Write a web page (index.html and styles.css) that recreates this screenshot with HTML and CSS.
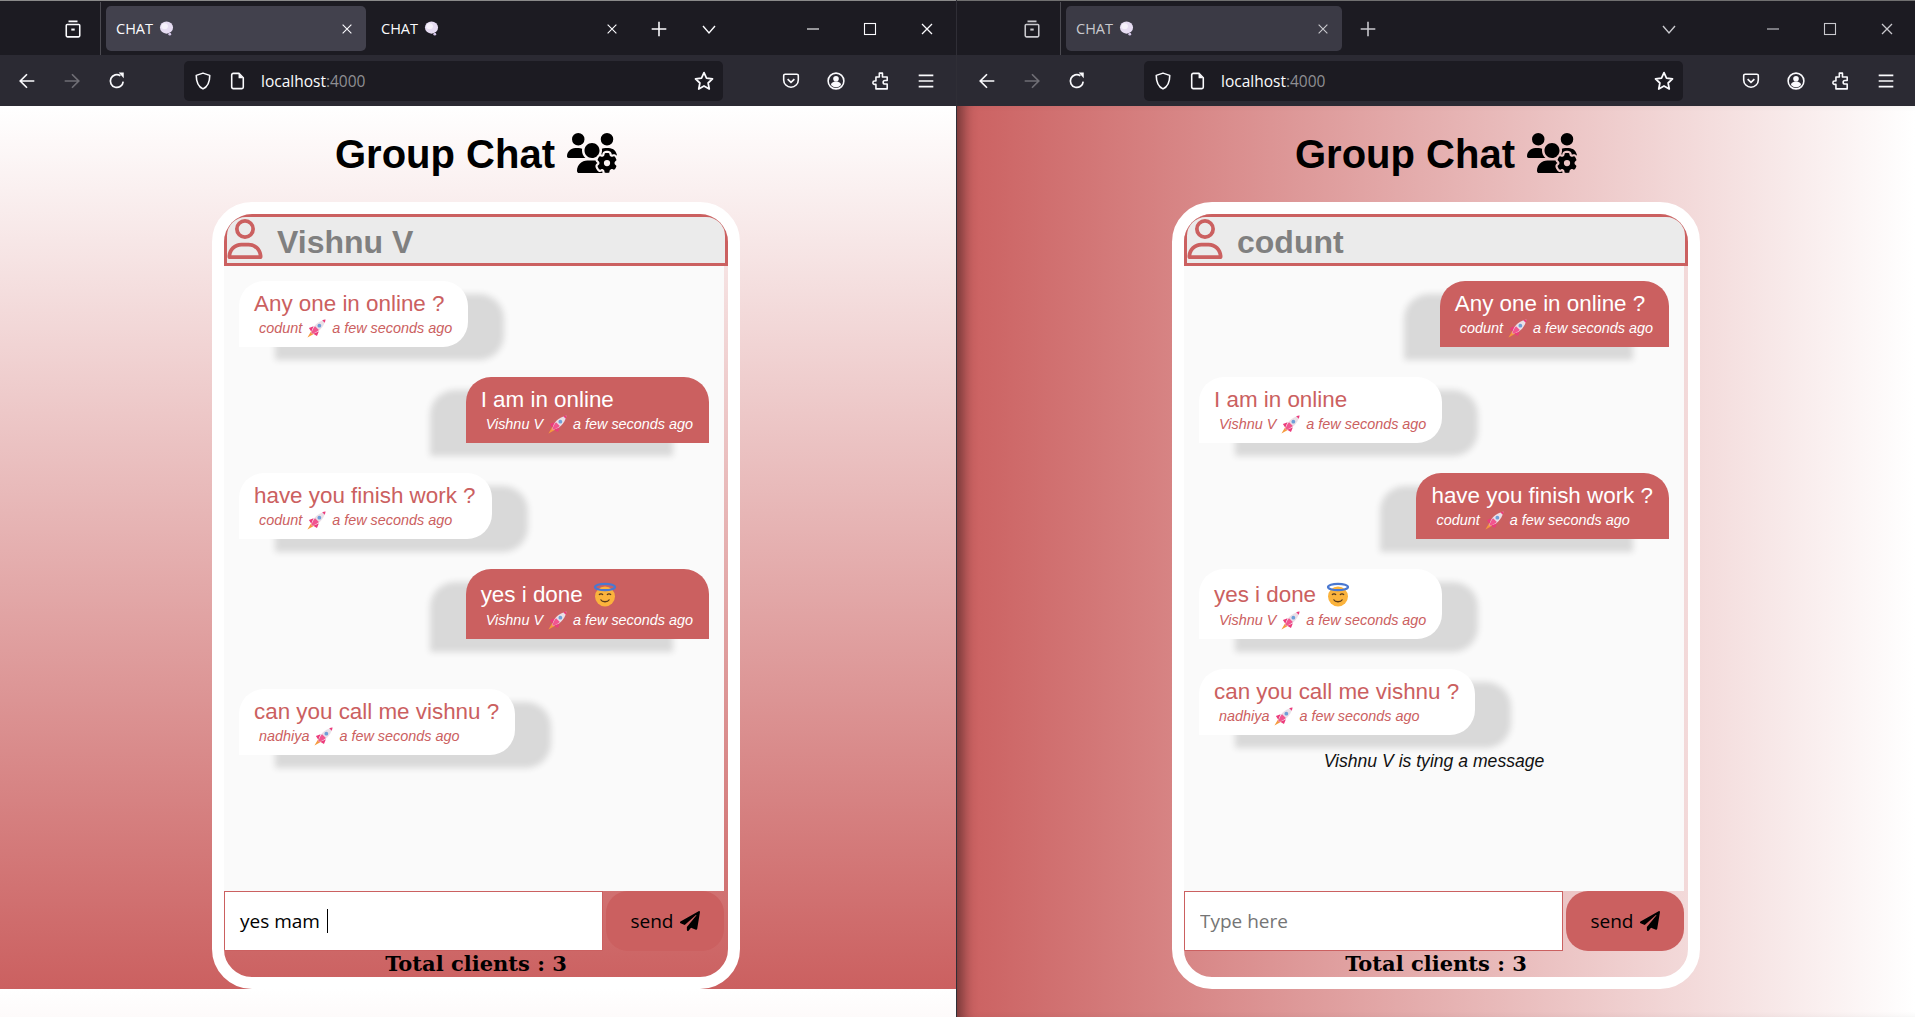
FILE: index.html
```html
<!DOCTYPE html>
<html lang="en">

<head>
    <meta charset="UTF-8">
    <meta name="viewport" content="width=device-width, initial-scale=1.0">
    <title>Group Chat</title>
    <link rel="stylesheet" href="styles.css">
</head>

<body>
    <!-- shared icons -->
    <svg class="defs" aria-hidden="true">
        <symbol id="i-view" viewBox="0 0 16 16"><path d="M4 1.2h8M2.8 4h10.4a.8.8 0 0 1 .8.8v9a1.2 1.2 0 0 1-1.2 1.2H3.2A1.2 1.2 0 0 1 2 13.800v-9a.8.8 0 0 1 .8-.8z" fill="none" stroke="currentColor" stroke-width="1.400"/><path d="M6.500 8.500h3" stroke="currentColor" stroke-width="1.800"/></symbol>
        <symbol id="i-x" viewBox="0 0 16 16"><path d="M3 3l10 10M13 3L3 13" fill="none" stroke="currentColor" stroke-width="1.300"/></symbol>
        <symbol id="i-plus" viewBox="0 0 16 16"><path d="M8 1.500v13M1.500 8h13" fill="none" stroke="currentColor" stroke-width="1.400"/></symbol>
        <symbol id="i-down" viewBox="0 0 16 16"><path d="M2 5l6 7 6-7" fill="none" stroke="currentColor" stroke-width="1.400"/></symbol>
        <symbol id="i-min" viewBox="0 0 16 16"><path d="M2 8h12" fill="none" stroke="currentColor" stroke-width="1.100"/></symbol>
        <symbol id="i-max" viewBox="0 0 16 16"><rect x="2.500" y="2.500" width="11" height="11" fill="none" stroke="currentColor" stroke-width="1.100"/></symbol>
        <symbol id="i-back" viewBox="0 0 16 16"><path d="M14.500 8H2M8 2L2 8l6 6" fill="none" stroke="currentColor" stroke-width="1.500"/></symbol>
        <symbol id="i-forward" viewBox="0 0 16 16"><path d="M1.500 8H14M8 2l6 6-6 6" fill="none" stroke="currentColor" stroke-width="1.500"/></symbol>
        <symbol id="i-reload" viewBox="0 0 16 16"><path d="M13.500 8.500A5.700 5.700 0 1 1 11 3.300" fill="none" stroke="currentColor" stroke-width="1.500"/><path d="M9.500 0.500h4.500v5z" fill="currentColor"/></symbol>
        <symbol id="i-shield" viewBox="0 0 16 16"><path d="M8 1l6 2c0 6-1.500 9.800-6 12C3.500 12.800 2 9 2 3z" fill="none" stroke="currentColor" stroke-width="1.400" stroke-linejoin="round"/></symbol>
        <symbol id="i-page" viewBox="0 0 16 16"><path d="M3.800 1.200h5l3.900 3.900v8.300a1.400 1.400 0 0 1-1.400 1.400H3.800a1.400 1.400 0 0 1-1.400-1.400V2.600a1.400 1.400 0 0 1 1.400-1.400z" fill="none" stroke="currentColor" stroke-width="1.400"/><path d="M8.500 1.500v4h4z" fill="currentColor"/></symbol>
        <symbol id="i-star" viewBox="0 0 16 16"><path d="M8 1.300l2 4.400 4.800.6-3.500 3.300.9 4.800L8 12l-4.200 2.400.9-4.800L1.200 6.300 6 5.700z" fill="none" stroke="currentColor" stroke-width="1.400" stroke-linejoin="round"/></symbol>
        <symbol id="i-pocket" viewBox="0 0 16 16"><path d="M2.800 2h10.400A1.300 1.300 0 0 1 14.500 3.300V7a6.500 6.500 0 0 1-13 0V3.300A1.300 1.300 0 0 1 2.800 2z" fill="none" stroke="currentColor" stroke-width="1.400"/><path d="M5 6.300l3 2.900 3-2.900" fill="none" stroke="currentColor" stroke-width="1.500"/></symbol>
        <symbol id="i-account" viewBox="0 0 16 16"><circle cx="8" cy="8" r="7" fill="none" stroke="currentColor" stroke-width="1.400"/><circle cx="8" cy="6" r="2.500" fill="currentColor"/><path d="M3.500 11.500a4.500 3 0 0 1 9 0 6 6 0 0 1-9 0z" fill="currentColor"/></symbol>
        <symbol id="i-ext" viewBox="0 0 16 16"><path d="M6.500 1h2.800v3.500h4.200v3h-2a1.600 1.600 0 0 0 0 3.200h2v4.300H3.500V11H2.300a1.500 1.500 0 0 1 0-3h1.200V4.500h3z" fill="none" stroke="currentColor" stroke-width="1.400" stroke-linejoin="round"/></symbol>
        <symbol id="i-menu" viewBox="0 0 16 16"><path d="M1.500 3h13M1.500 8h13M1.500 13h13" fill="none" stroke="currentColor" stroke-width="1.400"/></symbol>
        <symbol id="i-thought" viewBox="0 0 16 16"><ellipse cx="8" cy="7" rx="7" ry="6.500" fill="#e6dcf2"/><ellipse cx="6" cy="5.500" rx="3.500" ry="3.200" fill="#f6f2fb"/><circle cx="11.500" cy="14" r="1.500" fill="#d2c4e6"/></symbol>
        <symbol id="i-group" viewBox="0 0 640 512"><path d="M144 160A80 80 0 1 0 144 0a80 80 0 1 0 0 160zm368 0A80 80 0 1 0 512 0a80 80 0 1 0 0 160zM0 298.700C0 310.400 9.600 320 21.300 320H234.700c.2 0 .4 0 .7 0c-26.600-23.500-43.300-57.800-43.300-96c0-7.600 .7-15 1.900-22.300c-13.600-6.300-28.700-9.700-44.600-9.700H106.700C47.800 192 0 239.800 0 298.700zM320 320c24 0 45.900-8.800 62.700-23.300c2.500-3.700 5.200-7.300 8-10.700c2.700-3.300 5.700-6.100 9-8.300C410 262.300 416 243.900 416 224c0-53-43-96-96-96s-96 43-96 96s43 96 96 96zm65.400 60.200c-10.300-5.900-18.100-16.200-20.800-28.200H261.300C187.700 352 128 411.700 128 485.300c0 14.700 11.900 26.700 26.700 26.700H455.200c-2.100-5.200-3.200-10.900-3.200-16.400v-3c-1.300-.7-2.700-1.500-4-2.300l-2.600 1.500c-16.800 9.700-40.500 8-54.700-9.700c-4.500-5.600-8.600-11.500-12.400-17.600l-.1-.2-.1-.2-2.400-4.100-.1-.2-.1-.2c-3.400-6.200-6.400-12.600-9-19.300c-8.200-21.200 2.200-42.600 19-52.300l2.700-1.500c0-.8 0-1.500 0-2.300s0-1.500 0-2.300l-2.700-1.500zM533.300 192H490.700c-15.900 0-31 3.500-44.600 9.700c1.300 7.200 1.900 14.700 1.900 22.300c0 17.400-3.500 33.900-9.700 49c2.500 .9 4.900 2 7.200 3.300l2.600 1.500c1.300-.8 2.600-1.600 4-2.300v-3c0-19.400 13.300-39.100 35.800-42.600c7.900-1.200 16-1.900 24.200-1.900s16.300 .6 24.200 1.900c22.500 3.500 35.800 23.200 35.800 42.600v3c1.300 .7 2.700 1.500 4 2.300l2.600-1.500c16.800-9.700 40.500-8 54.700 9.700c2.300 2.800 4.500 5.800 6.600 8.700c-2.100-57.100-49-102.600-106.600-102.600zm91.300 163.900c6.300-3.600 9.500-11.100 6.800-18c-2.100-5.500-4.600-10.800-7.400-15.900l-2.300-4c-3.100-5.100-6.500-9.900-10.200-14.500c-4.600-5.700-12.700-6.700-19-3l-2.900 1.700c-9.200 5.300-20.400 4-29.600-1.300s-16.100-14.500-16.100-25.100v-3.400c0-7.300-4.900-13.800-12.100-14.900c-6.500-1-13.100-1.500-19.900-1.500s-13.400 .5-19.900 1.500c-7.200 1.100-12.100 7.600-12.100 14.900v3.400c0 10.600-6.900 19.800-16.100 25.100s-20.400 6.600-29.600 1.300l-2.900-1.700c-6.300-3.600-14.400-2.600-19 3c-3.700 4.600-7.100 9.500-10.200 14.600l-2.300 3.900c-2.800 5.100-5.300 10.400-7.400 15.900c-2.600 6.800 .5 14.300 6.800 17.900l2.900 1.700c9.200 5.300 13.700 15.800 13.700 26.400s-4.500 21.100-13.700 26.400l-3 1.700c-6.300 3.600-9.500 11.100-6.800 17.900c2.100 5.500 4.600 10.700 7.400 15.800l2.400 4.100c3 5.100 6.400 9.900 10.100 14.500c4.600 5.700 12.700 6.700 19 3l2.900-1.700c9.200-5.300 20.400-4 29.600 1.300s16.100 14.500 16.100 25.100v3.400c0 7.300 4.900 13.800 12.100 14.900c6.500 1 13.100 1.500 19.900 1.500s13.400-.5 19.900-1.500c7.200-1.100 12.100-7.600 12.100-14.900v-3.400c0-10.600 6.900-19.800 16.100-25.100s20.400-6.600 29.600-1.300l2.900 1.700c6.300 3.600 14.400 2.600 19-3c3.700-4.600 7.100-9.400 10.100-14.500l2.400-4.200c2.800-5.100 5.300-10.300 7.400-15.800c2.600-6.800-.5-14.300-6.800-17.900l-3-1.700c-9.200-5.300-13.700-15.800-13.700-26.400s4.500-21.100 13.700-26.400l3-1.700zM472 384a40 40 0 1 1 80 0 40 40 0 1 1 -80 0z"/></symbol>
        <symbol id="i-user" viewBox="0 0 448 512"><path d="M304 128a80 80 0 1 0 -160 0 80 80 0 1 0 160 0zM96 128a128 128 0 1 1 256 0A128 128 0 1 1 96 128zM49.300 464H398.700c-8.900-63.300-63.300-112-129-112H178.300c-65.700 0-120.100 48.700-129 112zM0 482.300C0 383.800 79.800 304 178.300 304h91.400C368.200 304 448 383.800 448 482.300c0 16.400-13.300 29.700-29.700 29.700H29.700C13.300 512 0 498.700 0 482.300z"/></symbol>
        <symbol id="i-plane" viewBox="0 0 512 512"><path d="M476 3.200L12.500 270.600c-18.100 10.400-15.800 35.600 2.200 43.200L121 358.400l287.300-253.200c5.500-4.900 13.300 2.600 8.600 8.300L176 407v80.500c0 23.600 28.500 32.900 42.500 15.800L282 426l124.600 52.200c14.200 6 30.400-2.900 33-18.200l72-432C515 7.800 493.300-6.800 476 3.200z"/></symbol>
        <symbol id="e-rocket" viewBox="0 0 20 20"><path d="M4.500 12.500L0.500 19.500 7.500 15.500z" fill="#f59a3c"/><path d="M2 9.500l5-2-2.500 6zM10.500 18l2-5-6 2.500z" fill="#ec3b7c"/><path d="M4.500 15.500C5 9 10 2.500 19.500 .5 17.500 10 11 15 4.500 15.500z" fill="#eadfe6"/><path d="M4.500 15.500c.5-3 2-6 4-8l4 4c-2 2-5 3.500-8 4z" fill="#f2558f"/><circle cx="13" cy="7" r="2" fill="#6f9fd8"/><path d="M16 1.300l2.700 2.700c.4-1.100.6-2.300.8-3.500-1.200.2-2.400.4-3.500.8z" fill="#ec3b7c"/></symbol>
        <symbol id="e-halo" viewBox="0 0 24 24"><circle cx="12" cy="13.500" r="10" fill="#fbb33c"/><ellipse cx="12" cy="4" rx="10" ry="3.200" fill="none" stroke="#4a78d0" stroke-width="2.200"/><path d="M6 12c1-1.500 3-1.500 4 0M14 12c1-1.500 3-1.500 4 0M7.500 16.500c2 3 7 3 9 0" fill="none" stroke="#5a3a1c" stroke-width="1.300"/></symbol>
    </svg>

    <div class="desktop">
        <section class="window">
            <div class="tabbar">
                <span class="cell"><svg class="ico"><use href="#i-view"/></svg></span>
                <span class="tab-sep"></span>
                <div class="tab tab-active">
                    <span>CHAT</span>
                    <svg class="ico-thought"><use href="#i-thought"/></svg>
                    <svg class="ico-x"><use href="#i-x"/></svg>
                </div>
                <div class="tab">
                    <span>CHAT</span>
                    <svg class="ico-thought"><use href="#i-thought"/></svg>
                    <svg class="ico-x"><use href="#i-x"/></svg>
                </div>
                <span class="cell cell-plus"><svg class="ico"><use href="#i-plus"/></svg></span>
                <span class="cell cell-list"><svg class="ico ico-small"><use href="#i-down"/></svg></span>
                <div class="win-controls">
                    <span><svg class="ico ico-small"><use href="#i-min"/></svg></span>
                    <span><svg class="ico ico-small"><use href="#i-max"/></svg></span>
                    <span><svg class="ico ico-small"><use href="#i-x"/></svg></span>
                </div>
            </div>
            <div class="toolbar">
                <span class="cell"><svg class="ico"><use href="#i-back"/></svg></span>
                <span class="cell cell-off"><svg class="ico"><use href="#i-forward"/></svg></span>
                <span class="cell"><svg class="ico"><use href="#i-reload"/></svg></span>
                <div class="urlbar">
                    <svg class="ico ico-shield"><use href="#i-shield"/></svg>
                    <svg class="ico ico-page"><use href="#i-page"/></svg>
                    <span class="url">localhost<span class="url-port">:4000</span></span>
                    <svg class="ico ico-star"><use href="#i-star"/></svg>
                </div>
                <div class="tools">
                    <span class="cell"><svg class="ico"><use href="#i-pocket"/></svg></span>
                    <span class="cell"><svg class="ico"><use href="#i-account"/></svg></span>
                    <span class="cell"><svg class="ico"><use href="#i-ext"/></svg></span>
                    <span class="cell"><svg class="ico"><use href="#i-menu"/></svg></span>
                </div>
            </div>

            <main class="page page-vertical">
                <h1 class="title">Group Chat <svg class="title-icon"><use href="#i-group"/></svg></h1>
                <div class="chat">
                    <header class="chat-head">
                        <svg class="head-icon"><use href="#i-user"/></svg>
                        <span class="head-name">Vishnu V</span>
                    </header>
                    <div class="messages">
                        <div class="msg msg-in">
                            <div class="msg-text">Any one in online ?</div>
                            <div class="msg-meta">codunt <svg class="rocket"><use href="#e-rocket"/></svg> a few seconds ago</div>
                        </div>
                        <div class="msg msg-out">
                            <div class="msg-text">I am in online</div>
                            <div class="msg-meta">Vishnu V <svg class="rocket"><use href="#e-rocket"/></svg> a few seconds ago</div>
                        </div>
                        <div class="msg msg-in">
                            <div class="msg-text">have you finish work ?</div>
                            <div class="msg-meta">codunt <svg class="rocket"><use href="#e-rocket"/></svg> a few seconds ago</div>
                        </div>
                        <div class="msg msg-out msg-tall">
                            <div class="msg-text">yes i done <svg class="halo"><use href="#e-halo"/></svg></div>
                            <div class="msg-meta">Vishnu V <svg class="rocket"><use href="#e-rocket"/></svg> a few seconds ago</div>
                        </div>
                        <div class="typing-gap"></div>
                        <div class="msg msg-in">
                            <div class="msg-text">can you call me vishnu ?</div>
                            <div class="msg-meta">nadhiya <svg class="rocket"><use href="#e-rocket"/></svg> a few seconds ago</div>
                        </div>
                    </div>
                    <form class="send-row">
                        <div class="field"><span>yes mam</span><span class="caret"></span></div>
                        <button class="send-btn" type="button">send <svg class="plane"><use href="#i-plane"/></svg></button>
                    </form>
                    <div class="total">Total clients : 3</div>
                </div>
            </main>
        </section>

        <section class="window window-right">
            <div class="tabbar tabbar-dim">
                <span class="cell"><svg class="ico"><use href="#i-view"/></svg></span>
                <span class="tab-sep"></span>
                <div class="tab tab-active tab-wide">
                    <span>CHAT</span>
                    <svg class="ico-thought"><use href="#i-thought"/></svg>
                    <svg class="ico-x"><use href="#i-x"/></svg>
                </div>
                <span class="cell cell-plus"><svg class="ico"><use href="#i-plus"/></svg></span>
                <span class="cell cell-list cell-push"><svg class="ico ico-small"><use href="#i-down"/></svg></span>
                <div class="win-controls">
                    <span><svg class="ico ico-small"><use href="#i-min"/></svg></span>
                    <span><svg class="ico ico-small"><use href="#i-max"/></svg></span>
                    <span><svg class="ico ico-small"><use href="#i-x"/></svg></span>
                </div>
            </div>
            <div class="toolbar">
                <span class="cell"><svg class="ico"><use href="#i-back"/></svg></span>
                <span class="cell cell-off"><svg class="ico"><use href="#i-forward"/></svg></span>
                <span class="cell"><svg class="ico"><use href="#i-reload"/></svg></span>
                <div class="urlbar">
                    <svg class="ico ico-shield"><use href="#i-shield"/></svg>
                    <svg class="ico ico-page"><use href="#i-page"/></svg>
                    <span class="url">localhost<span class="url-port">:4000</span></span>
                    <svg class="ico ico-star"><use href="#i-star"/></svg>
                </div>
                <div class="tools">
                    <span class="cell"><svg class="ico"><use href="#i-pocket"/></svg></span>
                    <span class="cell"><svg class="ico"><use href="#i-account"/></svg></span>
                    <span class="cell"><svg class="ico"><use href="#i-ext"/></svg></span>
                    <span class="cell"><svg class="ico"><use href="#i-menu"/></svg></span>
                </div>
            </div>

            <main class="page page-horizontal">
                <h1 class="title">Group Chat <svg class="title-icon"><use href="#i-group"/></svg></h1>
                <div class="chat">
                    <header class="chat-head">
                        <svg class="head-icon"><use href="#i-user"/></svg>
                        <span class="head-name">codunt</span>
                    </header>
                    <div class="messages">
                        <div class="msg msg-out">
                            <div class="msg-text">Any one in online ?</div>
                            <div class="msg-meta">codunt <svg class="rocket"><use href="#e-rocket"/></svg> a few seconds ago</div>
                        </div>
                        <div class="msg msg-in">
                            <div class="msg-text">I am in online</div>
                            <div class="msg-meta">Vishnu V <svg class="rocket"><use href="#e-rocket"/></svg> a few seconds ago</div>
                        </div>
                        <div class="msg msg-out">
                            <div class="msg-text">have you finish work ?</div>
                            <div class="msg-meta">codunt <svg class="rocket"><use href="#e-rocket"/></svg> a few seconds ago</div>
                        </div>
                        <div class="msg msg-in msg-tall">
                            <div class="msg-text">yes i done <svg class="halo"><use href="#e-halo"/></svg></div>
                            <div class="msg-meta">Vishnu V <svg class="rocket"><use href="#e-rocket"/></svg> a few seconds ago</div>
                        </div>
                        <div class="msg msg-in">
                            <div class="msg-text">can you call me vishnu ?</div>
                            <div class="msg-meta">nadhiya <svg class="rocket"><use href="#e-rocket"/></svg> a few seconds ago</div>
                        </div>
                        <div class="typing">Vishnu V is tying a message</div>
                    </div>
                    <form class="send-row">
                        <input class="field" type="text" placeholder="Type here">
                        <button class="send-btn" type="button">send <svg class="plane"><use href="#i-plane"/></svg></button>
                    </form>
                    <div class="total">Total clients : 3</div>
                </div>
            </main>
        </section>
    </div>
</body>

</html>
```

FILE: styles.css
```css
/* Basic page setup */
* {
    box-sizing: border-box;
}

body {
    margin: 0;
    height: 100vh;
    overflow: hidden;
    font-family: "Liberation Sans", Arial, sans-serif;
}

.defs {
    display: none;
}

.desktop {
    display: flex;
    height: 100vh;
}

/* Browser windows */
.window {
    display: flex;
    flex-direction: column;
    width: 956px;
    flex-shrink: 0;
}

.window-right {
    width: 959px;
    border-left: 1px solid #2f2e36;
}

.window-right .tabbar {
    padding-left: 2px;
}

.window-right .toolbar {
    padding-left: 3px;
}

/* Tab strip */
.tabbar {
    display: flex;
    align-items: center;
    height: 55px;
    padding-top: 1px;
    background-color: #1c1b22;
    border-top: 1px solid #8a8a8a;
    color: #fbfbfe;
    font-family: "Open Sans", sans-serif;
    font-size: 14.5px;
}

.tabbar > .cell:first-child {
    margin-left: 50px;
}

.toolbar > .cell:first-child {
    margin-left: 4px;
}

.cell {
    display: flex;
    align-items: center;
    justify-content: center;
    width: 45px;
    flex-shrink: 0;
}

.cell-off {
    color: #6f6e75;
}

.cell-list {
    margin-left: 5px;
    margin-right: 53px;
}

.cell-push {
    margin-left: auto;
}

.tabbar-dim {
    color: #c9c9ce;
    border-top-color: #707070;
}

.tabbar-dim .cell-plus {
    margin-left: 3px;
}

.tab-sep {
    width: 1px;
    height: 54px;
    margin: 0 5px;
    background-color: #4c4b52;
}

.window-right .tab-sep {
    margin-left: 6px;
}

.tab {
    display: flex;
    align-items: center;
    width: 260px;
    height: 45px;
    padding: 0 12px 0 10px;
    margin-right: 5px;
    border-radius: 5px;
}

.tab-active {
    background-color: #42414d;
}

.tabbar-dim .tab-active {
    background-color: #3b3a45;
}

.tab-wide {
    width: 276px;
    margin-right: 0;
}

.ico-thought {
    width: 15px;
    height: 15px;
    margin-left: 6px;
}

.ico-x {
    width: 14px;
    height: 14px;
    margin-left: auto;
}

.win-controls {
    display: flex;
}

.win-controls span {
    display: flex;
    align-items: center;
    justify-content: center;
    width: 57px;
}

.ico {
    width: 18px;
    height: 18px;
    flex-shrink: 0;
}

.ico-small {
    width: 16px;
    height: 16px;
}

/* Navigation toolbar */
.toolbar {
    display: flex;
    align-items: center;
    height: 51px;
    background-color: #2b2a33;
    color: #fbfbfe;
}

.urlbar {
    display: flex;
    align-items: center;
    width: 539px;
    height: 40px;
    margin-left: 45px;
    padding: 0 9px 0 10px;
    background-color: #1c1b22;
    border-radius: 5px;
    font-family: "Open Sans", sans-serif;
    font-size: 15.5px;
}

.ico-page {
    margin-left: 17px;
}

.url {
    margin-left: 14px;
}

.url-port {
    color: #8f8f93;
}

.ico-star {
    width: 20px;
    height: 20px;
    margin-left: auto;
}

.tools {
    display: flex;
    margin-left: 45px;
}

/* Page backgrounds */
.page {
    display: flex;
    flex-direction: column;
    align-items: center;
    flex: 1;
    min-height: 0;
}

.page-vertical {
    padding-right: 4px;
    background: linear-gradient(to bottom, #fff, #cb6060) 0 0 / 100% 883px repeat-y;
}

.page-horizontal {
    background: linear-gradient(to right, #cb6060, #fff);
    box-shadow: inset 16px 0 14px -10px rgba(0, 0, 0, 0.45);
}

.title {
    display: flex;
    align-items: center;
    gap: 12px;
    height: 46px;
    margin: 25px 0;
    font-size: 40px;
    line-height: 46px;
    color: #000;
}

.title-icon {
    width: 50px;
    height: 40px;
    margin-top: -2px;
}

/* Chat card */
.chat {
    display: flex;
    flex-direction: column;
    width: 528px;
    height: 787px;
    border: 12px solid #fff;
    border-radius: 40px;
    overflow: hidden;
}

.chat-head {
    display: flex;
    align-items: center;
    height: 52px;
    flex-shrink: 0;
    background-color: #ebebeb;
    border: 3px solid #cb6060;
    border-radius: 22px 22px 0 0;
}

.head-icon {
    width: 36px;
    height: 40px;
    fill: #cb6060;
    margin-bottom: 2px;
}

.head-name {
    margin: 4px 0 0 14px;
    font-size: 32px;
    font-weight: bold;
    color: #808080;
}

.messages {
    display: flex;
    flex-direction: column;
    flex: 1;
    width: 500px;
    padding-top: 15px;
    background-color: #fafafa;
}

/* Message bubbles */
.msg {
    width: fit-content;
    height: 66px;
    margin-bottom: 30px;
    padding: 10px 16px 8px 15px;
}

.msg-tall {
    height: 70px;
}

.msg-in {
    align-self: flex-start;
    margin-left: 15px;
    background-color: #fff;
    color: #cb6060;
    border-radius: 25px 25px 25px 0;
    box-shadow: 36px 13px 6px #d9d9d9;
}

.msg-out {
    align-self: flex-end;
    margin-right: 15px;
    background-color: #cb6060;
    color: #fff;
    border-radius: 25px 25px 0 0;
    box-shadow: -36px 13px 6px #d9d9d9;
}

.msg-text {
    height: 26px;
    font-size: 22.4px;
    line-height: 26px;
    white-space: nowrap;
}

.msg-tall .msg-text {
    height: 30px;
    padding-top: 3px;
}

.msg-meta {
    display: flex;
    align-items: center;
    gap: 4px;
    padding-left: 5px;
    font-size: 14.4px;
    font-style: italic;
    line-height: 22px;
    white-space: nowrap;
}

.rocket {
    width: 19px;
    height: 19px;
    margin: 0 2px 0 1px;
}

.halo {
    width: 24px;
    height: 26px;
    margin-left: 4px;
    vertical-align: -6px;
}

.typing-gap {
    height: 20px;
    flex-shrink: 0;
}

.typing {
    margin-top: -14px;
    text-align: center;
    font-size: 17.6px;
    font-style: italic;
    line-height: 20px;
    color: #111;
}

/* Message form */
.send-row {
    display: flex;
    justify-content: space-between;
    width: 500px;
    height: 60px;
    flex-shrink: 0;
}

.field {
    display: flex;
    align-items: center;
    width: 379px;
    height: 60px;
    padding: 0 15px;
    background-color: #fff;
    border: 1px solid #cb6060;
    border-radius: 0;
    outline: none;
    font-family: "Open Sans", sans-serif;
    font-size: 19px;
    color: #000;
}

.field::placeholder {
    color: #757575;
}

.caret {
    width: 1px;
    height: 24px;
    margin-left: 7px;
    background-color: #000;
}

.send-btn {
    display: flex;
    align-items: center;
    justify-content: center;
    gap: 6px;
    width: 118px;
    padding: 0;
    background-color: #cb6060;
    border: none;
    border-radius: 22px;
    font-family: "Open Sans", sans-serif;
    font-size: 19px;
    color: #000;
}

.plane {
    width: 20px;
    height: 20px;
}

.total {
    text-align: center;
    font-family: "DejaVu Serif", Georgia, serif;
    font-size: 21px;
    font-weight: bold;
    line-height: 26px;
    color: #000;
}
```
